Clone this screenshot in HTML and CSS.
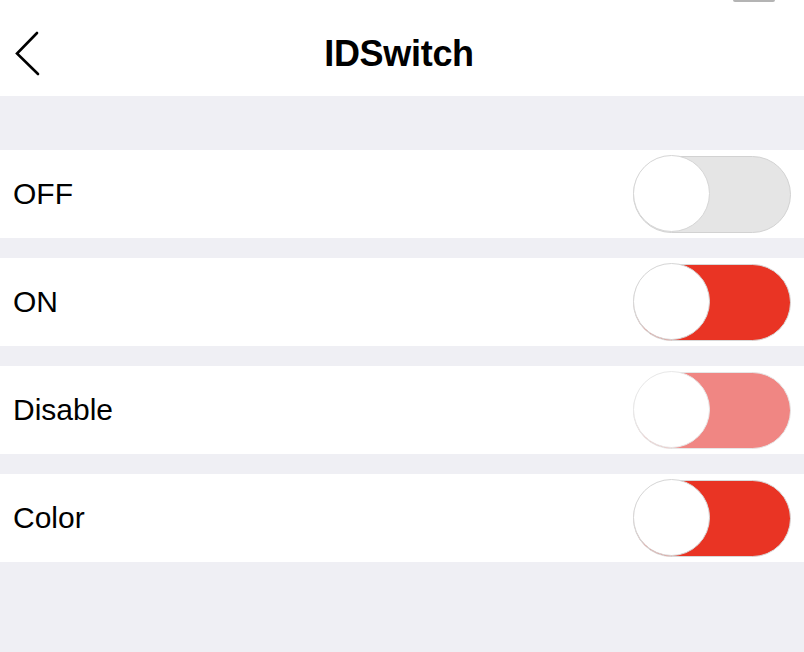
FILE: index.html
```html
<!DOCTYPE html>
<html>
<head>
<meta charset="utf-8">
<link rel="stylesheet" href="styles.css">
</head>
<body>
<header class="nav">
  <div class="status-battery"></div>
  <button class="back" aria-label="Back">
    <svg width="40" height="56" viewBox="0 0 40 56"><path d="M37 13 L17 33.5 L38 54" fill="none" stroke="#000" stroke-width="2.6" stroke-linecap="round" stroke-linejoin="miter"/></svg>
  </button>
  <h1 class="title">IDSwitch</h1>
</header>
<main class="list">
  <div class="row"><span class="label">OFF</span><span class="switch off"><span class="knob"></span></span></div>
  <div class="row"><span class="label">ON</span><span class="switch on"><span class="knob"></span></span></div>
  <div class="row"><span class="label">Disable</span><span class="switch disabled"><span class="knob"></span></span></div>
  <div class="row"><span class="label">Color</span><span class="switch on"><span class="knob"></span></span></div>
</main>
</body>
</html>
```
FILE: styles.css
```css
html, body {
  margin: 0;
  padding: 0;
}
body {
  background: #efeff4;
  font-family: "Liberation Sans", Arial, sans-serif;
  color: #000;
  width: 804px;
  height: 652px;
  overflow: hidden;
}
.nav {
  position: relative;
  height: 96px;
  background: #fff;
  display: flex;
  align-items: center;
  justify-content: center;
}
.status-battery {
  position: absolute;
  top: 0;
  left: 733px;
  width: 42px;
  height: 2px;
  background: #b4b4b4;
  border-radius: 0 0 2px 2px;
}
.back {
  position: absolute;
  left: 0;
  top: 20px;
  width: 40px;
  height: 56px;
  padding: 0;
  border: 0;
  background: none;
}
.back svg {
  display: block;
}
.title {
  margin: 0;
  font-size: 36px;
  font-weight: bold;
  letter-spacing: -0.3px;
  line-height: 1;
  transform: translate(-3px, 6px);
}
.list {
  margin-top: 54px;
  display: flex;
  flex-direction: column;
  gap: 20px;
}
.row {
  height: 88px;
  background: #fff;
  display: flex;
  align-items: center;
  justify-content: space-between;
  padding: 0 13px;
}
.label {
  font-size: 30px;
  line-height: 1;
}
.switch {
  position: relative;
  width: 158px;
  height: 77px;
  box-sizing: border-box;
  border-radius: 39px;
  border: 1.5px solid #d2d2d2;
  background: #e5e5e5;
}
.switch.on {
  background: #e93424;
  border-color: #d8d8d8;
}
.switch.disabled {
  background: #f08683;
  border-color: #e6e6e6;
}
.knob {
  position: absolute;
  left: -1.5px;
  top: -1.5px;
  width: 77px;
  height: 77px;
  box-sizing: border-box;
  border-radius: 50%;
  background: #fff;
  border: 1.5px solid #d6d6d6;
}
.switch.disabled .knob {
  border-color: #e8e8e8;
}
```
